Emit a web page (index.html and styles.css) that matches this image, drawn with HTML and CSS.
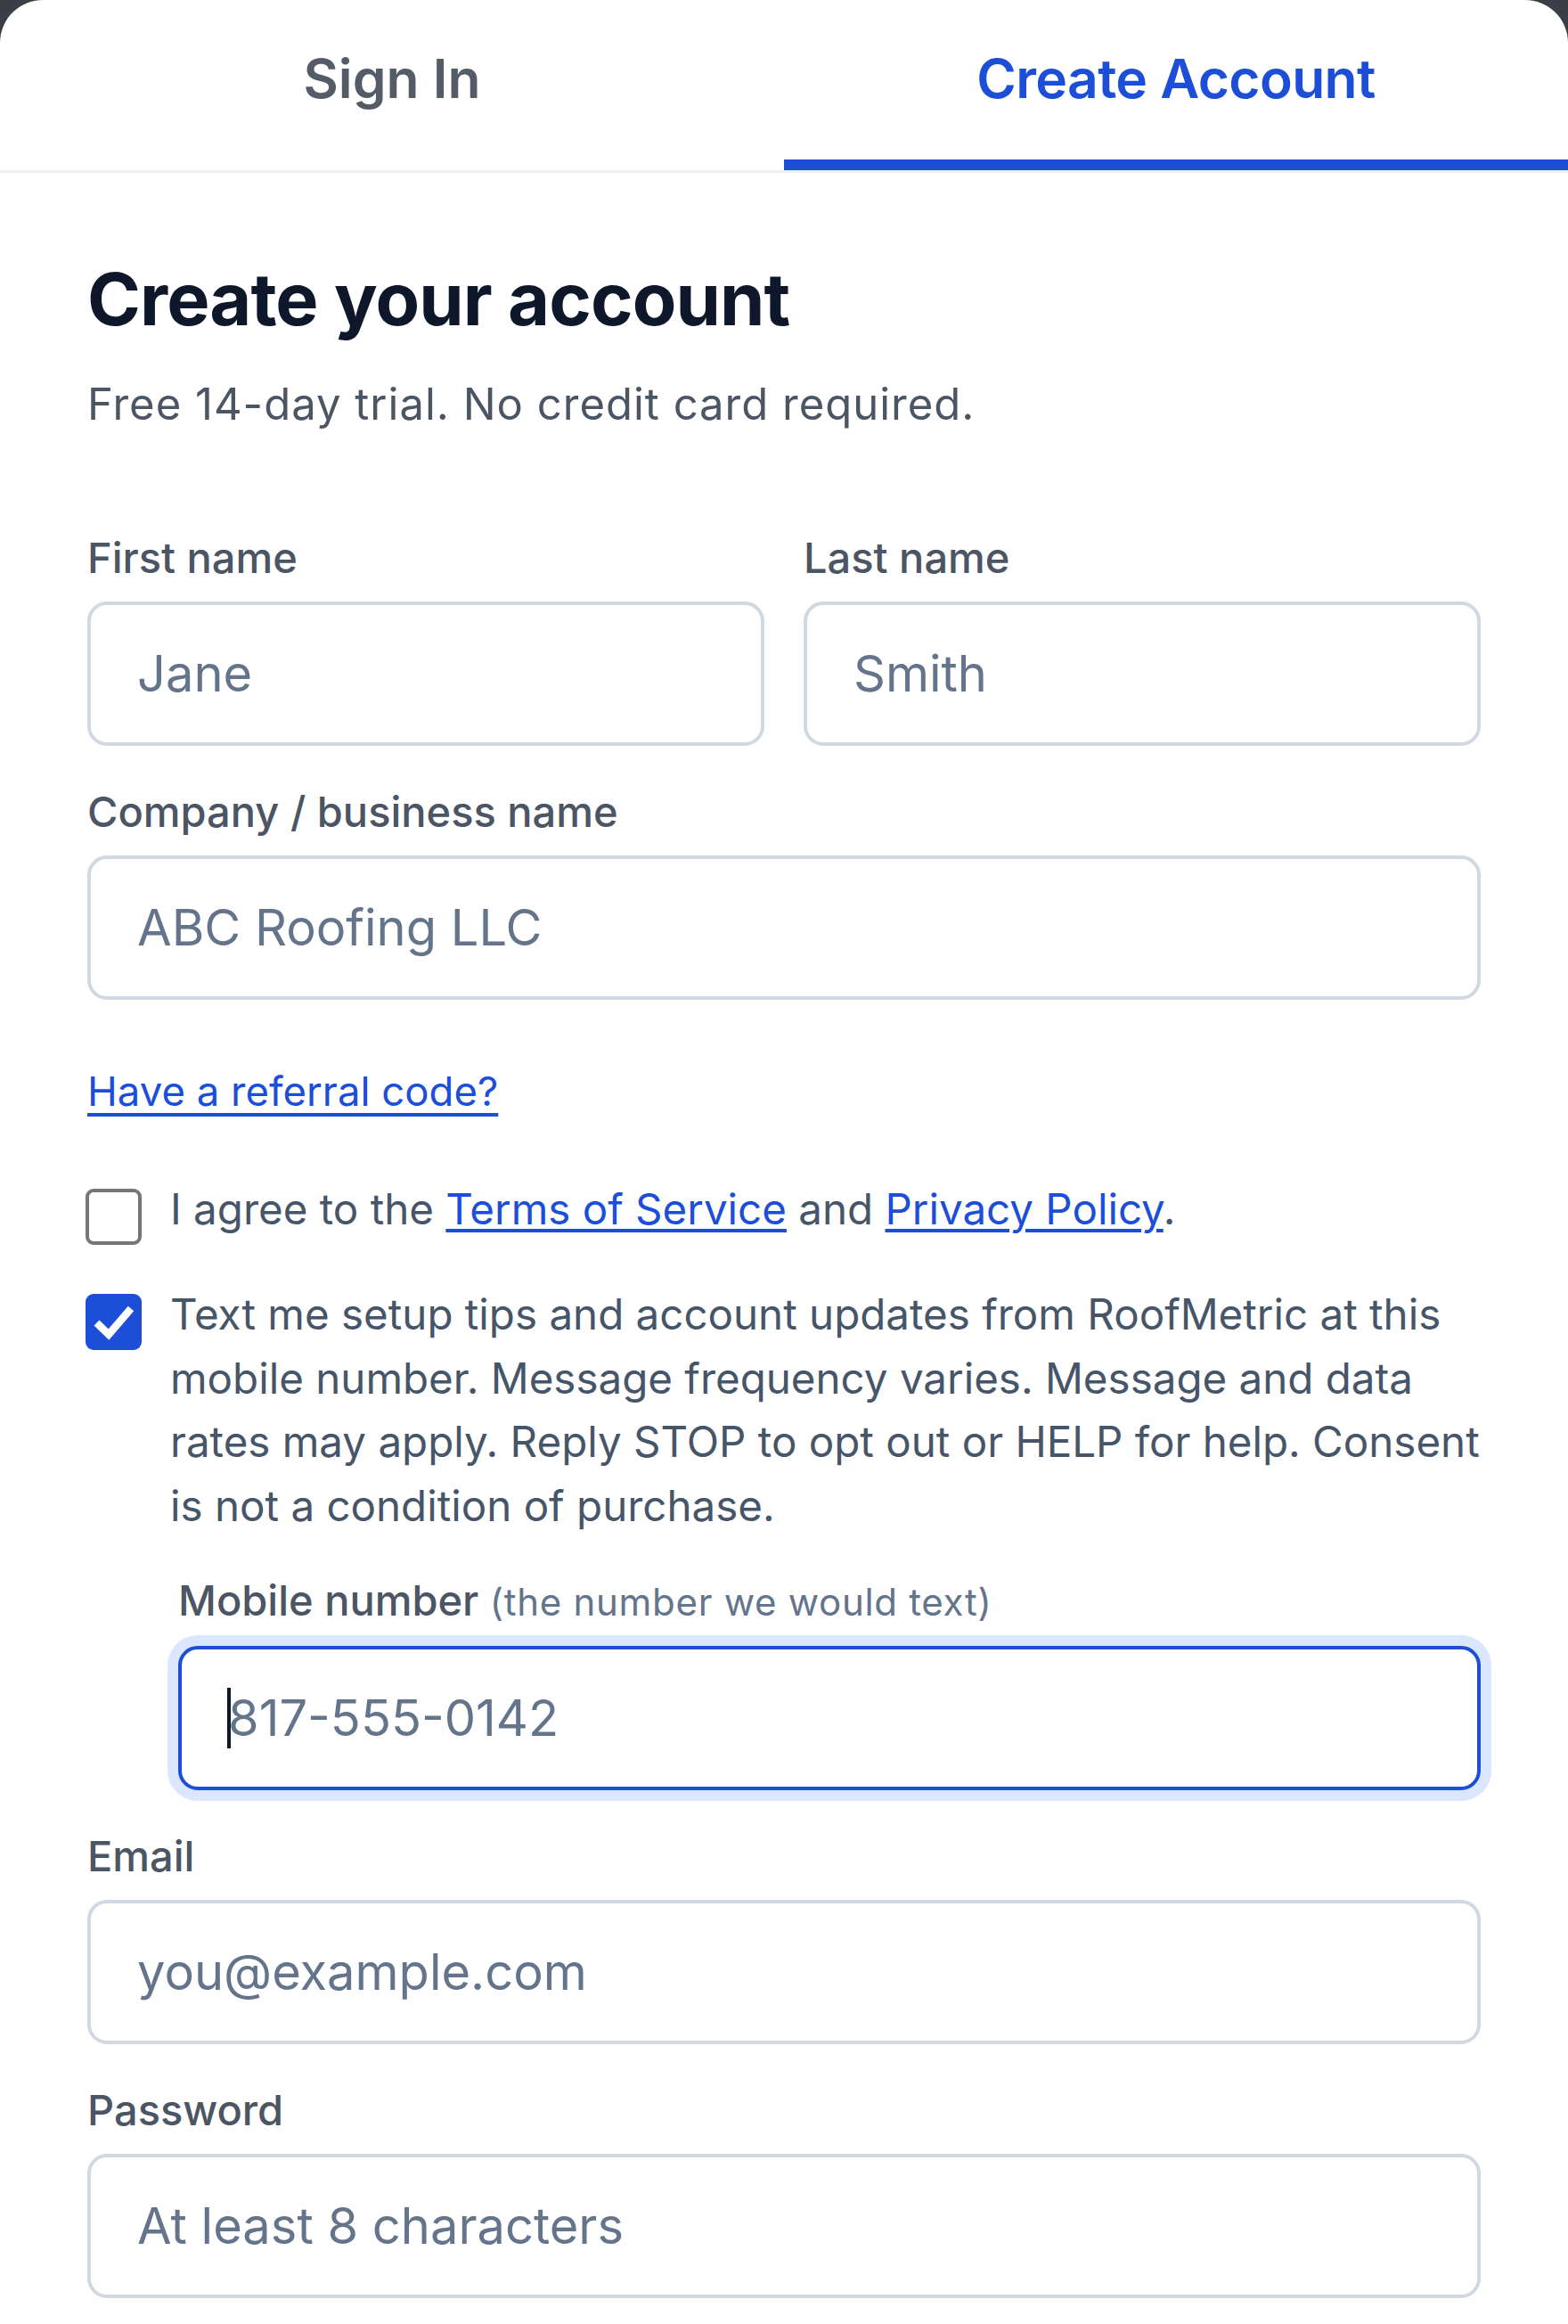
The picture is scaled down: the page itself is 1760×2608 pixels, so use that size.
FILE: index.html
```html
<!DOCTYPE html>
<html lang="en">
<head>
<meta charset="utf-8">
<title>Create Account</title>
<link rel="stylesheet" href="styles.css">
</head>
<body>
<div class="sheet">
  <nav class="tabs">
    <button class="tab" type="button">Sign In</button>
    <button class="tab tab-active" type="button">Create Account</button>
  </nav>
  <main class="content">
    <h1 class="title">Create your account</h1>
    <p class="subtitle">Free 14-day trial. No credit card required.</p>

    <div class="name-row">
      <div class="field">
        <label class="label">First name</label>
        <input class="input" type="text" placeholder="Jane">
      </div>
      <div class="field">
        <label class="label">Last name</label>
        <input class="input" type="text" placeholder="Smith">
      </div>
    </div>

    <div class="field field-spaced">
      <label class="label">Company / business name</label>
      <input class="input" type="text" placeholder="ABC Roofing LLC">
    </div>

    <a class="referral" href="#">Have a referral code?</a>

    <div class="check-row check-first">
      <span class="box"></span>
      <p class="check-text">I agree to the <a class="link" href="#">Terms of Service</a> and <a class="link" href="#">Privacy Policy</a>.</p>
    </div>

    <div class="check-row check-second">
      <span class="box box-checked">
        <svg class="tick" viewBox="0 0 63 63" width="63" height="63"><polyline points="12.5,32.5 26,45.5 51,16.5" fill="none" stroke="#fff" stroke-width="8.5" stroke-linecap="butt" stroke-linejoin="miter"/></svg>
      </span>
      <p class="check-text">Text me setup tips and account updates from RoofMetric at this mobile number. Message frequency varies. Message and data rates may apply. Reply STOP to opt out or HELP for help. Consent is not a condition of purchase.</p>
    </div>

    <div class="mobile">
      <label class="label">Mobile number <span class="hint">(the number we would text)</span></label>
      <div class="focus-wrap">
        <input class="input input-focus" type="tel" placeholder="817-555-0142">
        <span class="caret"></span>
      </div>
    </div>

    <div class="field field-spaced">
      <label class="label">Email</label>
      <input class="input" type="email" placeholder="you@example.com">
    </div>

    <div class="field field-spaced">
      <label class="label">Password</label>
      <input class="input" type="password" placeholder="At least 8 characters">
    </div>
  </main>
</div>
</body>
</html>
```

FILE: styles.css
```css
* { box-sizing: border-box; }

html, body {
  margin: 0;
  padding: 0;
  background: #3b3e46;
}

body {
  font-family: Inter, "Noto Sans", "Liberation Sans", sans-serif;
  min-height: 2608px;
}

.sheet {
  background: #ffffff;
  border-radius: 48px 48px 0 0;
  min-height: 2608px;
  overflow: hidden;
}

.tabs {
  display: flex;
  border-bottom: 3px solid #eceef2;
}

.tab {
  flex: 1 1 0;
  background: none;
  border: 0;
  border-bottom: 12px solid transparent;
  padding: 43px 0 45px;
  margin: 0;
  font-family: inherit;
  font-size: 60.5px;
  line-height: 91px;
  font-weight: 600;
  color: #545c68;
  cursor: pointer;
}

.tab-active {
  color: #1d4ed8;
  border-bottom-color: #1d4ed8;
  letter-spacing: -0.6px;
}

.content {
  padding: 93px 98px 0 98px;
}

.title {
  margin: 0;
  font-size: 81px;
  line-height: 99px;
  font-weight: 700;
  color: #0f172a;
  letter-spacing: -0.9px;
}

.subtitle {
  margin: 35px 0 0;
  font-size: 49px;
  line-height: 66px;
  letter-spacing: 1px;
  color: #4b5563;
}

.name-row {
  margin-top: 106px;
  display: grid;
  grid-template-columns: 1fr 1fr;
  column-gap: 44px;
}

.field {
  display: flex;
  flex-direction: column;
}

.field-spaced {
  margin-top: 41px;
}

.label {
  display: block;
  font-size: 47px;
  line-height: 66px;
  font-weight: 500;
  color: #4b5563;
  margin-bottom: 16px;
}

.hint {
  font-size: 42px;
  font-weight: 400;
  letter-spacing: 0.7px;
  color: #64748b;
}

.input {
  display: block;
  width: 100%;
  height: 162px;
  border: 4px solid #d1d8e1;
  border-radius: 22px;
  padding: 0 52px;
  font-family: inherit;
  font-size: 56px;
  color: #0f172a;
  background: #ffffff;
  outline: none;
}

.input::placeholder {
  color: #64748b;
  opacity: 1;
}

.input-focus {
  border-color: #1d4ed8;
  box-shadow: 0 0 0 12px #dbe7fe;
}

.focus-wrap {
  position: relative;
}

.caret {
  position: absolute;
  left: 55px;
  top: 47px;
  width: 4px;
  height: 68px;
  background: #0f172a;
}

.referral {
  display: block;
  width: fit-content;
  margin-top: 69.5px;
  font-size: 45.5px;
  line-height: 66px;
  color: #1d4ed8;
  text-decoration: underline;
  text-decoration-thickness: 3.5px;
  text-underline-offset: 8px;
}

.check-row {
  display: flex;
  align-items: flex-start;
  gap: 32px;
  margin-left: -2px;
}

.check-first {
  margin-top: 63.5px;
}

.check-second {
  margin-top: 42px;
}

.box {
  flex: 0 0 63px;
  width: 63px;
  height: 63px;
  margin-top: 13px;
  border: 4px solid #767676;
  border-radius: 9px;
  background: #ffffff;
}

.box-checked {
  border: 0;
  background: #1d4ed8;
}

.tick {
  display: block;
}

.check-text {
  margin: 0;
  font-size: 47.5px;
  line-height: 71.5px;
  color: #475569;
}

.link {
  color: #1d4ed8;
  text-decoration: underline;
  text-decoration-thickness: 3.5px;
  text-underline-offset: 5px;
}

.mobile {
  margin-top: 38px;
  margin-left: 102px;
}
```
